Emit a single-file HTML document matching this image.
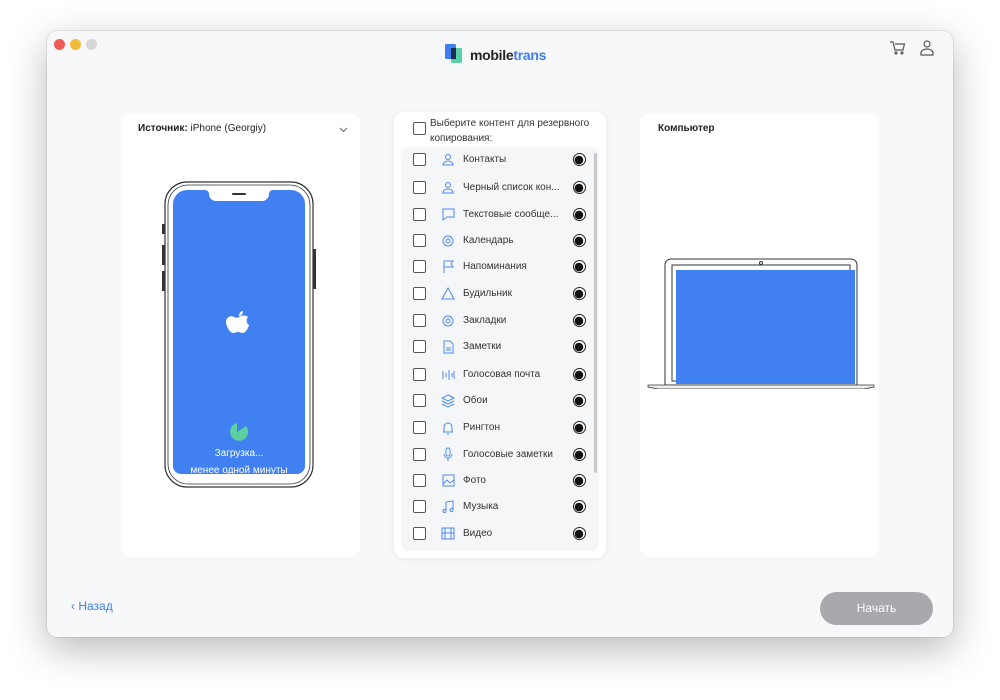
<!DOCTYPE html>
<html><head><meta charset="utf-8"><style>
*{box-sizing:border-box;margin:0;padding:0}
body{width:1000px;height:700px;background:#fff;font-family:"Liberation Sans",sans-serif;position:relative;overflow:hidden}
.win{position:absolute;left:47px;top:31px;width:906px;height:606px;background:#f7f8fa;border-radius:10px;box-shadow:0 12px 40px rgba(0,0,0,.28),0 0 0 1px rgba(0,0,0,.08)}
.dot{position:absolute;top:8px;width:11px;height:11px;border-radius:50%}
.panel{position:absolute;background:#fff;border-radius:10px}
.t{position:absolute;font-size:10px;color:#222}
.row{position:absolute;left:12px;width:180px;height:20px}
.cb{position:absolute;left:0;top:3px;width:13px;height:13px;border:1.2px solid #555;border-radius:2px;background:#fff}
.ic{position:absolute;left:28px;top:2px;width:15px;height:15px}
.lb{position:absolute;left:50px;top:4px;font-size:10px;color:#333;white-space:nowrap}
.rd{position:absolute;left:160px;top:3px;width:13px;height:13px;border-radius:50%;border:1.5px solid #222;background:radial-gradient(circle at 45% 55%,#111 0 4px,#fff 4.5px)}
</style></head><body>
<div class="win">
<div class="dot" style="left:7px;background:#ee5d55"></div>
<div class="dot" style="left:23px;background:#f2bc3d"></div>
<div class="dot" style="left:39px;background:#d6d6d6"></div>
<svg style="position:absolute;left:398px;top:13px" width="18" height="20"><rect x="0" y="0" width="11" height="15" rx="1.5" fill="#3f7ef0"/><rect x="6" y="4" width="11" height="15" rx="1.5" fill="#5ad0a8"/><rect x="6" y="4" width="5" height="11" fill="#1f2b4a"/></svg>
<div style="position:absolute;left:423px;top:16px;font-size:14px;font-weight:bold;color:#222;letter-spacing:-.3px">mobile<span style="color:#3f7ef0">trans</span></div>
<svg style="position:absolute;left:842px;top:9px" width="18" height="16" fill="none" stroke="#555" stroke-width="1.2"><path d="M1 2h3l2 8h8l1.5-6H6"/><circle cx="7" cy="13" r="1"/><circle cx="13" cy="13" r="1"/></svg>
<svg style="position:absolute;left:872px;top:8px" width="16" height="17" fill="none" stroke="#555" stroke-width="1.2"><circle cx="8" cy="5" r="3"/><path d="M2 16v-2a6 4 0 0 1 12 0v2z"/></svg>

<div class="panel" style="left:74px;top:82px;width:239px;height:444px">
<div class="t" style="left:17px;top:10px;font-weight:bold">Источник: <span style="font-weight:normal">iPhone (Georgiy)</span></div>
<svg style="position:absolute;left:218px;top:14px" width="9" height="6" fill="none" stroke="#666"><path d="M1 1l3.5 3.5L8 1"/></svg>
<svg style="position:absolute;left:38px;top:66px" width="160" height="312">
<rect x="6" y="3" width="148" height="305" rx="22" fill="#fff" stroke="#333" stroke-width="1.2"/>
<rect x="9" y="6" width="142" height="299" rx="20" fill="none" stroke="#333" stroke-width=".8"/>
<rect x="3" y="45" width="3" height="10" fill="#333"/><rect x="3" y="66" width="3" height="20" fill="#333"/><rect x="3" y="92" width="3" height="20" fill="#333"/><rect x="154" y="70" width="3" height="40" fill="#333"/>
<path d="M28 11h18a4 4 0 0 1 4 4a7 7 0 0 0 7 7h46a7 7 0 0 0 7-7a4 4 0 0 1 4-4h18a14 14 0 0 1 14 14v262a8 8 0 0 1-8 8H22a8 8 0 0 1-8-8V25a14 14 0 0 1 14-14z" fill="#4180f0"/>
<rect x="73" y="14" width="14" height="2" rx="1" fill="#333"/>
<path d="M80 138c3-2 7-2 9 0c-2 2-2 6 1 8c-1 4-4 8-6 8s-3-1-5-1s-3 1-5 1c-3 0-7-7-7-11c0-5 5-7 8-5c2 1 3 1 5 0zM80 137c0-3 2-5 4-5c0 3-2 5-4 5z" fill="#fff"/>
<path d="M78 244a9 9 0 1 0 9 3l-9 6z" fill="#5ed0a0"/>
<text x="80" y="277" fill="#fff" font-size="10" text-anchor="middle" font-family="Liberation Sans">Загрузка...</text>
<text x="80" y="294" fill="#fff" font-size="10" text-anchor="middle" font-family="Liberation Sans">менее одной минуты</text>
</svg>
</div>

<div class="panel" style="left:347px;top:81px;width:212px;height:446px;box-shadow:0 2px 8px rgba(0,0,0,.06)">
<div class="cb" style="left:19px;top:10px"></div>
<div class="t" style="left:36px;top:4px;line-height:15px;color:#333">Выберите контент для резервного<br>копирования:</div>
<div style="position:absolute;left:7px;top:35px;width:198px;height:404px;background:#f5f6f8;border-radius:8px">
<div style="position:absolute;right:2px;top:6px;width:3px;height:320px;background:#c8c8cc;border-radius:2px"></div>
</div>
</div>

<div class="panel" style="left:593px;top:82px;width:239px;height:444px">
<div class="t" style="left:18px;top:10px;font-weight:bold">Компьютер</div>
<svg style="position:absolute;left:4px;top:140px" width="232" height="136">
<path d="M21 12a6 6 0 0 1 6-6h180a6 6 0 0 1 6 6v120H21z" fill="#fff" stroke="#333" stroke-width="1"/>
<circle cx="117" cy="10" r="1.5" fill="none" stroke="#333"/>
<rect x="28" y="12" width="178" height="116" fill="none" stroke="#333"/>
<rect x="32" y="17" width="179" height="114" fill="#4180f0"/>
<path d="M4 132h226v2l-10 2H14l-10-2z" fill="#eee" stroke="#333" stroke-width=".8"/>
</svg>
</div>

<div style="position:absolute;left:24px;top:568px;font-size:12px;color:#3f7ef0">‹ Назад</div>
<div style="position:absolute;left:773px;top:561px;width:113px;height:33px;border-radius:17px;background:#a8a8ad;color:#fff;font-size:12px;text-align:center;line-height:33px">Начать</div>
</div>

<div style="position:absolute;left:401px;top:0">
<div class="row" style="top:150px"><div class="cb"></div><svg class="ic" fill="none" stroke="#4a8af4"><circle cx="7" cy="5" r="2.5"/><path d="M2 13a5 4 0 0 1 10 0z"/></svg><div class="lb">Контакты</div><div class="rd"></div></div>
<div class="row" style="top:178px"><div class="cb"></div><svg class="ic" fill="none" stroke="#4a8af4"><circle cx="7" cy="5" r="2.5"/><path d="M2 13a5 4 0 0 1 10 0z"/></svg><div class="lb">Черный список кон...</div><div class="rd"></div></div>
<div class="row" style="top:205px"><div class="cb"></div><svg class="ic" fill="none" stroke="#4a8af4"><path d="M2 2h11v8H6l-4 3z"/></svg><div class="lb">Текстовые сообще...</div><div class="rd"></div></div>
<div class="row" style="top:231px"><div class="cb"></div><svg class="ic" fill="none" stroke="#4a8af4"><circle cx="7" cy="8" r="5"/><circle cx="7" cy="8" r="2"/></svg><div class="lb">Календарь</div><div class="rd"></div></div>
<div class="row" style="top:257px"><div class="cb"></div><svg class="ic" fill="none" stroke="#4a8af4"><path d="M3 14V2h9l-2 3 2 3H3"/></svg><div class="lb">Напоминания</div><div class="rd"></div></div>
<div class="row" style="top:284px"><div class="cb"></div><svg class="ic" fill="none" stroke="#4a8af4"><path d="M7 2l6 11H1z"/></svg><div class="lb">Будильник</div><div class="rd"></div></div>
<div class="row" style="top:311px"><div class="cb"></div><svg class="ic" fill="none" stroke="#4a8af4"><circle cx="7" cy="8" r="5"/><circle cx="7" cy="8" r="2"/></svg><div class="lb">Закладки</div><div class="rd"></div></div>
<div class="row" style="top:337px"><div class="cb"></div><svg class="ic" fill="none" stroke="#4a8af4"><path d="M3 2h6l3 3v9H3z M5 9h5M5 11h5"/></svg><div class="lb">Заметки</div><div class="rd"></div></div>
<div class="row" style="top:365px"><div class="cb"></div><svg class="ic" fill="none" stroke="#4a8af4"><path d="M2 4v8M5 6v4M8 3v10M11 6v4M13 4v8"/></svg><div class="lb">Голосовая почта</div><div class="rd"></div></div>
<div class="row" style="top:391px"><div class="cb"></div><svg class="ic" fill="none" stroke="#4a8af4"><path d="M7 2l6 3-6 3-6-3zM1 8l6 3 6-3M1 11l6 3 6-3"/></svg><div class="lb">Обои</div><div class="rd"></div></div>
<div class="row" style="top:418px"><div class="cb"></div><svg class="ic" fill="none" stroke="#4a8af4"><path d="M3 12V7a4 4 0 0 1 8 0v5zM2 12h10M6 14h2"/></svg><div class="lb">Рингтон</div><div class="rd"></div></div>
<div class="row" style="top:445px"><div class="cb"></div><svg class="ic" fill="none" stroke="#4a8af4"><rect x="5" y="1" width="4" height="8" rx="2"/><path d="M3 7a4 4 0 0 0 8 0M7 11v3"/></svg><div class="lb">Голосовые заметки</div><div class="rd"></div></div>
<div class="row" style="top:471px"><div class="cb"></div><svg class="ic" fill="none" stroke="#4a8af4"><rect x="2" y="2" width="11" height="11"/><path d="M2 11l4-4 3 3 4-3"/></svg><div class="lb">Фото</div><div class="rd"></div></div>
<div class="row" style="top:497px"><div class="cb"></div><svg class="ic" fill="none" stroke="#4a8af4"><path d="M5 12V3l7-1v9"/><circle cx="3.5" cy="12" r="1.5"/><circle cx="10.5" cy="11" r="1.5"/></svg><div class="lb">Музыка</div><div class="rd"></div></div>
<div class="row" style="top:524px"><div class="cb"></div><svg class="ic" fill="none" stroke="#4a8af4"><rect x="1" y="2" width="12" height="11"/><path d="M4 2v11M10 2v11M1 7h12"/></svg><div class="lb">Видео</div><div class="rd"></div></div>
</div>
</body></html>
